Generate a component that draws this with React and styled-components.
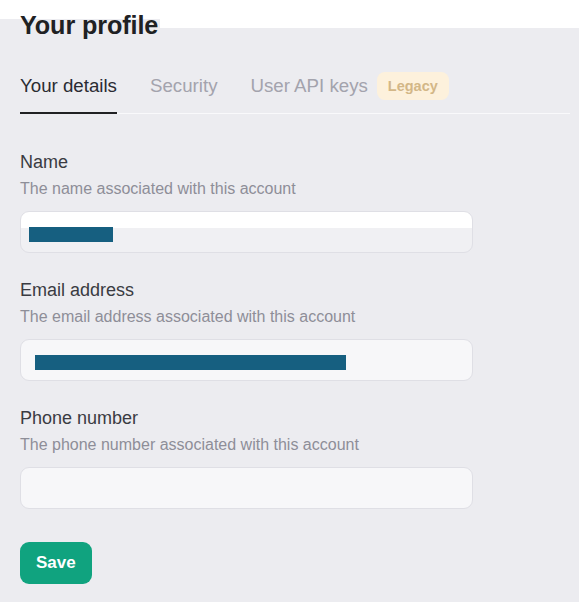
import styled, { createGlobalStyle } from "styled-components";

const GlobalStyle = createGlobalStyle`
  html, body {
    margin: 0;
    padding: 0;
    background: #ffffff;
  }
  body {
    font-family: "Liberation Sans", Arial, sans-serif;
    -webkit-font-smoothing: antialiased;
  }
`;

const GRAY = "#ececf0";

const Page = styled.div`
  width: 579px;
  min-height: 602px;
  background: linear-gradient(to bottom, #ffffff 0 28px, ${GRAY} 28px);
  display: flex;
  flex-direction: column;
`;

const Title = styled.h1`
  align-self: flex-start;
  margin: 0;
  width: 140px;
  padding: 5px 0 0 20px;
  height: 40px;
  line-height: 40px;
  font-size: 25.2px;
  font-weight: 700;
  color: #202123;
  background: linear-gradient(to bottom, #ffffff 0 19px, ${GRAY} 19px);
  letter-spacing: -0.1px;
`;

const Tabs = styled.div`
  display: flex;
  align-items: flex-end;
  gap: 33px;
  margin: 29px 9px 0 20px;
  border-bottom: 1px solid #f9f9fb;
`;

const Tab = styled.div`
  display: flex;
  align-items: center;
  gap: 9px;
  padding-bottom: 14px;
  margin-bottom: -1px;
  font-size: 18.7px;
  line-height: 24px;
  color: ${(p) => (p.$active ? "#2a2b32" : "#a3a3ad")};
  border-bottom: 2px solid ${(p) => (p.$active ? "#202123" : "transparent")};
`;

const Badge = styled.span`
  display: inline-flex;
  align-items: center;
  height: 28px;
  margin: -2px 0;
  padding: 0 11px;
  border-radius: 8px;
  background: #fdf1dc;
  color: #d3b787;
  font-size: 14.5px;
  font-weight: 700;
`;

const Form = styled.form`
  display: flex;
  flex-direction: column;
  gap: 25px;
  padding: 36px 0 0 20px;
`;

const Field = styled.div`
  display: flex;
  flex-direction: column;
`;

const Label = styled.label`
  font-size: 18px;
  line-height: 24px;
  color: #3a3b42;
`;

const Hint = styled.div`
  margin-top: 4px;
  font-size: 16px;
  line-height: 22px;
  color: #8e8e98;
`;

const Input = styled.div`
  box-sizing: border-box;
  margin-top: 11px;
  width: 453px;
  height: 42px;
  display: flex;
  align-items: center;
  padding-left: ${(p) => p.$inset}px;
  border: 1px solid #dfdfe5;
  border-radius: 9px;
  background: ${(p) =>
    p.$split
      ? "linear-gradient(to bottom, #ffffff 0 16px, #f0f0f3 16px)"
      : "#f7f7f9"};
`;

const Redacted = styled.span`
  display: block;
  height: 15px;
  margin-top: 4px;
  width: ${(p) => p.$width}px;
  background: #165f80;
`;

const SaveButton = styled.button`
  align-self: flex-start;
  margin-top: 8px;
  height: 42px;
  padding: 0 16px;
  border: none;
  border-radius: 9px;
  background: #10a37f;
  color: #ffffff;
  font-family: inherit;
  font-size: 17px;
  font-weight: 700;
`;

const fields = [
  {
    label: "Name",
    hint: "The name associated with this account",
    redact: 84,
    inset: 8,
    split: true,
  },
  {
    label: "Email address",
    hint: "The email address associated with this account",
    redact: 311,
    inset: 14,
  },
  {
    label: "Phone number",
    hint: "The phone number associated with this account",
  },
];

export default function App() {
  return (
    <>
      <GlobalStyle />
      <Page>
        <Title>Your profile</Title>
        <Tabs>
          <Tab $active>Your details</Tab>
          <Tab>Security</Tab>
          <Tab>
            User API keys
            <Badge>Legacy</Badge>
          </Tab>
        </Tabs>
        <Form onSubmit={(e) => e.preventDefault()}>
          {fields.map((f) => (
            <Field key={f.label}>
              <Label>{f.label}</Label>
              <Hint>{f.hint}</Hint>
              <Input $inset={f.inset || 0} $split={f.split}>
                {f.redact && <Redacted $width={f.redact} />}
              </Input>
            </Field>
          ))}
          <SaveButton type="submit">Save</SaveButton>
        </Form>
      </Page>
    </>
  );
}
